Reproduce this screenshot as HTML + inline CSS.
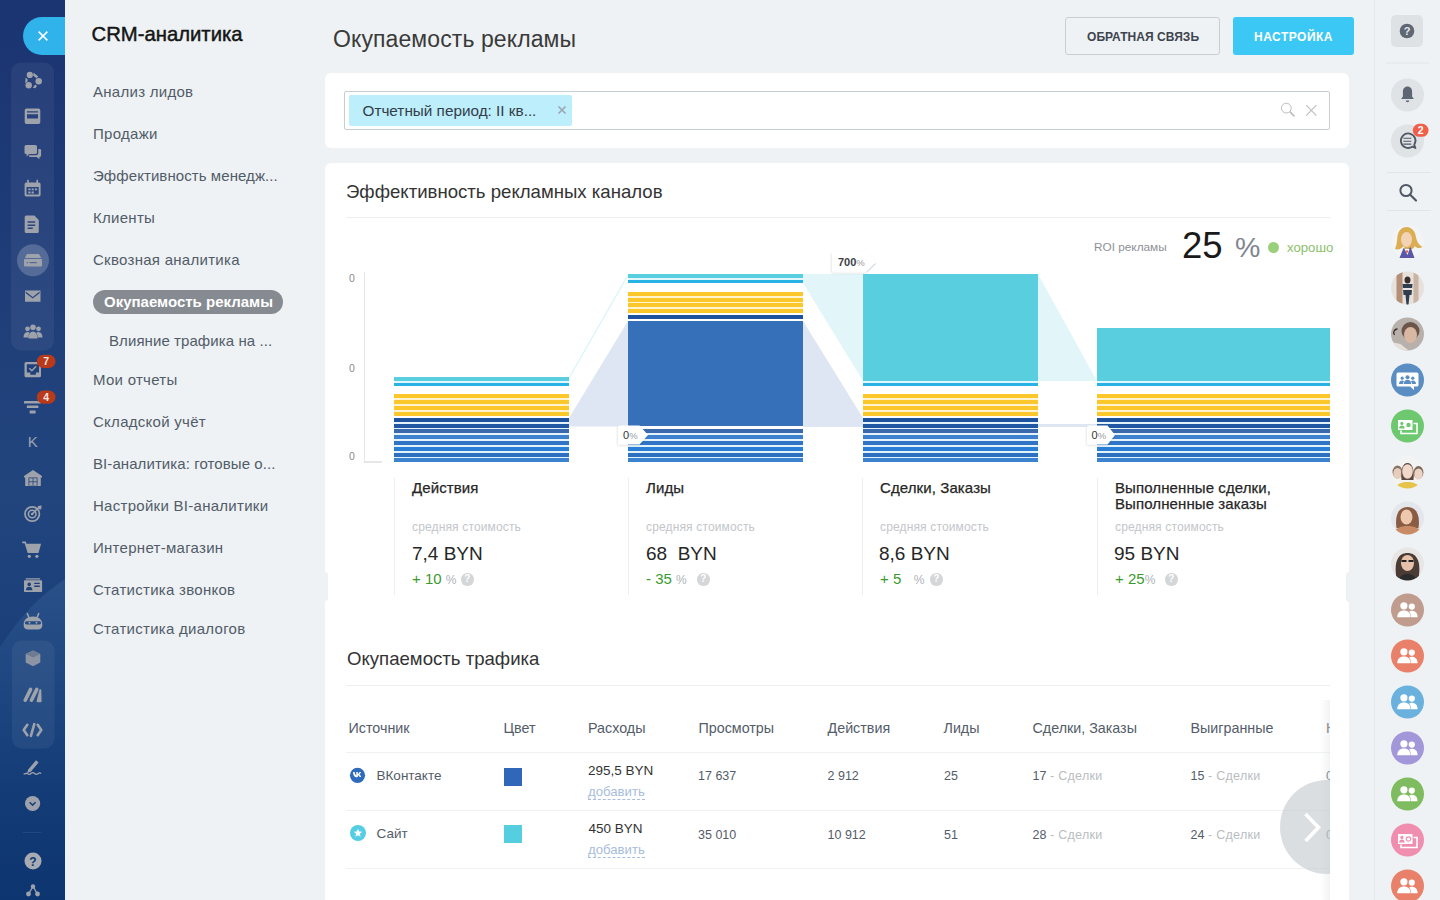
<!DOCTYPE html>
<html><head><meta charset="utf-8">
<style>
*{box-sizing:border-box;margin:0;padding:0}
html,body{width:1440px;height:900px;overflow:hidden}
body{background:#eef2f4;font-family:"Liberation Sans",sans-serif;color:#333;position:relative}
.a{position:absolute;white-space:nowrap}
#strip{position:absolute;left:0;top:0;width:65px;height:900px;background:linear-gradient(180deg,#1c3675 0%,#1f427f 45%,#143a76 75%,#0c3570 100%);overflow:hidden}
#closebtn{position:absolute;left:23px;top:17px;width:42px;height:38px;background:#2fb4ea;border-radius:19px 0 0 19px}
.grp{position:absolute;left:11px;width:43px;background:rgba(255,255,255,.06);border-radius:10px}
.menu{position:absolute;left:93px;font-size:15px;color:#525c69;letter-spacing:.28px}
.card{position:absolute;background:#fff;border-radius:6px}
#rpanel{position:absolute;left:1374px;top:0;width:66px;height:900px;background:#eef2f4;border-left:1px solid #e3e7ea}
.lt{top:479.4px;font-size:15px;color:#262626;letter-spacing:.1px;-webkit-text-stroke:.25px #262626}
.ls{top:520px;font-size:12px;color:#c3c6ca;letter-spacing:.15px}
.lv{top:542.5px;font-size:19px;color:#262626}
.lg{top:569.7px;font-size:15px;color:#3a9a2f}
.pc{font-size:12px;color:#b0b3b7}
.q{top:573px;width:12.5px;height:12.5px;border-radius:50%;background:#d4d6d8}
.q:after{content:"?";position:absolute;left:0;top:0;width:12.5px;text-align:center;font-size:10px;font-weight:bold;color:#fff;line-height:12.5px}
.th{top:720.1px;font-size:14.3px;color:#535c69}
.tn{font-size:13.5px;color:#535c69}
.tm{font-size:13.5px;color:#333}
.tl{font-size:13.2px;color:#a8bddc;border-bottom:1px dashed #a8bddc;line-height:15px}
.td{font-size:12.5px;color:#535c69}
.gs{color:#b9bdc1;letter-spacing:.3px}
</style></head><body>

<svg class="a" style="left:0;top:0" width="65" height="900" viewBox="0 0 65 900">
<defs>
<linearGradient id="sg" x1="0" y1="0" x2="0" y2="1">
<stop offset="0" stop-color="#1b3472"/>
<stop offset="0.3" stop-color="#1f3d78"/>
<stop offset="0.55" stop-color="#22457e"/>
<stop offset="0.8" stop-color="#163c77"/>
<stop offset="1" stop-color="#0d3570"/>
</linearGradient>
<linearGradient id="sg2" x1="0" y1="0" x2="0" y2="1">
<stop offset="0" stop-color="#2d548b" stop-opacity="1"/>
<stop offset=".5" stop-color="#1e4a85" stop-opacity=".5"/>
<stop offset="1" stop-color="#0c3873" stop-opacity="0"/>
</linearGradient>
</defs>
<rect width="65" height="900" fill="url(#sg)"/>
<path d="M0 647 Q28 603 65 579 L65 900 L0 900Z" fill="url(#sg2)" opacity=".8"/>
<path d="M65 17 L42 17 A19 19 0 0 0 42 55 L65 55Z" fill="#2fb3ea"/>
<path d="M38.6 31.6L47.4 40.4M47.4 31.6L38.6 40.4" stroke="#fff" stroke-width="1.5"/>
<rect x="11" y="62.5" width="43" height="288" rx="10" fill="#fff" fill-opacity=".055"/>
<rect x="12" y="640.5" width="42.5" height="108" rx="10" fill="#fff" fill-opacity=".055"/>
<g fill="#9ea2aa">
<!-- 1 circles -->
<circle cx="29.8" cy="74.9" r="3.1"/><circle cx="38.7" cy="81.2" r="3.2"/><circle cx="28.7" cy="85.3" r="3.2"/>
<path d="M33.7 72.8L38.3 76.6L36.6 78.2L33 75.4Z M25.6 77.6L27.6 79.3L27.5 81.6L25.2 83.2Z M32.8 87.8L35.2 84.6L37 86L35.2 88.2Z"/>
<!-- 2 window -->
<path d="M26.5 108.5h12a1.8 1.8 0 0 1 1.8 1.8v12a1.8 1.8 0 0 1 -1.8 1.8h-12a1.8 1.8 0 0 1 -1.8 -1.8v-12a1.8 1.8 0 0 1 1.8 -1.8Z M27 111.2v1.2h11v-1.2Z M27 114.3v4.2h11v-4.2Z" fill-rule="evenodd"/>
<!-- 3 chat -->
<path d="M24.5 146.5a1.6 1.6 0 0 1 1.6 -1.6h9.3a1.6 1.6 0 0 1 1.6 1.6v6a1.6 1.6 0 0 1 -1.6 1.6h-6l-2.8 2.3v-2.3h-0.5a1.6 1.6 0 0 1 -1.6 -1.6Z"/>
<path d="M38.3 149h1.5a1.3 1.3 0 0 1 1.3 1.3v5.3a1.3 1.3 0 0 1 -1.3 1.3h-0.4v2.4l-2.7 -2.4h-6.6a1.3 1.3 0 0 1 -1.3 -1.3v-0.3h7a2.5 2.5 0 0 0 2.5 -2.5Z"/>
<!-- 4 calendar -->
<path d="M26.3 182.5h12.6a1.7 1.7 0 0 1 1.7 1.7v10.6a1.7 1.7 0 0 1 -1.7 1.7h-12.6a1.7 1.7 0 0 1 -1.7 -1.7v-10.6a1.7 1.7 0 0 1 1.7 -1.7Z M26.5 187v7.5h12.2v-7.5Z M28.3 188.5h2.2v1.8h-2.2Z M31.6 188.5h2.2v1.8h-2.2Z M34.9 188.5h2.2v1.8h-2.2Z M28.3 191.6h2.2v1.8h-2.2Z M31.6 191.6h2.2v1.8h-2.2Z" fill-rule="evenodd"/>
<rect x="27.2" y="179.8" width="1.6" height="3.5"/><rect x="36.4" y="179.8" width="1.6" height="3.5"/>
<!-- 5 document -->
<path d="M26.2 215.6h8.2l4.4 4.4v11.5a1.5 1.5 0 0 1 -1.5 1.5h-11.1a1.5 1.5 0 0 1 -1.5 -1.5v-14.4a1.5 1.5 0 0 1 1.5 -1.5Z M27.6 221.3v1.5h7.6v-1.5Z M27.6 224.4v1.5h7.6v-1.5Z M27.6 227.5v1.5h5.2v-1.5Z" fill-rule="evenodd"/>
</g>
<!-- 6 active -->
<circle cx="33" cy="260.3" r="16" fill="#fff" fill-opacity=".2"/>
<g fill="#9ea2aa">
<path d="M27 254h12l2.2 4h-16.4Z"/>
<path d="M25 259h16.2a0.8 0.8 0 0 1 .8 .8v5.6a1 1 0 0 1 -1 1h-16a1 1 0 0 1 -1 -1v-5.6a.8 .8 0 0 1 .8 -.8Z M26.8 262h1.3v1.3h-1.3Z M29.6 262h7.2v1.3h-7.2Z" fill-rule="evenodd"/>
<!-- 7 mail -->
<path d="M25 290.5h15.5v11.2h-15.5Z M25.8 291.5l6.9 5.4 6.9 -5.4v1.8l-6.9 5.2 -6.9 -5.2Z" fill-rule="evenodd"/>
<!-- 8 people -->
<circle cx="33" cy="327.3" r="2.8"/><circle cx="27.5" cy="328.8" r="2.4"/><circle cx="38.5" cy="328.8" r="2.4"/>
<path d="M28.5 338.5c0 -4 1.8 -7 4.5 -7s4.5 3 4.5 7Z M23.5 337.5c0 -3.3 1.5 -5.5 4 -5.5 1 0 1.7 .3 2.3 .8c-1 1.3 -1.5 3 -1.5 4.7Z M42.5 337.5c0 -3.3 -1.5 -5.5 -4 -5.5 -1 0 -1.7 .3 -2.3 .8c1 1.3 1.5 3 1.5 4.7Z"/>
<!-- 9 task -->
<path d="M26 362h13.5a1.5 1.5 0 0 1 1.5 1.5v12.3a1.5 1.5 0 0 1 -1.5 1.5h-13.5a1.5 1.5 0 0 1 -1.5 -1.5v-12.3a1.5 1.5 0 0 1 1.5 -1.5Z M26.8 364.3v8.3h3.5v2.2h5.6v-2.2h3.1v-8.3Z" fill-rule="evenodd"/>
</g>
<path d="M29.3 368.2l2.6 2.5 4.2 -4.5" stroke="#9ea2aa" stroke-width="1.5" fill="none"/>
<g fill="#9ea2aa">
<!-- 10 funnel -->
<rect x="24" y="401" width="17" height="2.4" rx=".5"/><rect x="26.8" y="405.6" width="11.6" height="2.4" rx=".5"/><rect x="29.6" y="410.6" width="6" height="2.8" rx=".5"/>
<!-- 12 warehouse -->
<path d="M24 476l9 -6 9 6v1.5h-1.2v8.5h-15.6v-8.5h-1.2Z M28.5 477.5v8h9v-8Z" fill-rule="evenodd"/>
<rect x="29.3" y="478.3" width="3.3" height="3.1"/><rect x="33.4" y="478.3" width="3.3" height="3.1"/><rect x="29.3" y="482.2" width="3.3" height="3.3"/><rect x="33.4" y="482.2" width="3.3" height="3.3"/>
</g>
<g fill="none" stroke="#9ea2aa">
<!-- 13 target -->
<circle cx="32.2" cy="514" r="7.2" stroke-width="1.7"/><circle cx="32.2" cy="514" r="3.8" stroke-width="1.6"/>
<path d="M32.2 514L39 507.2" stroke-width="1.6"/>
</g>
<g fill="#9ea2aa">
<path d="M38 506l3.6 -.4 -.4 3.6 -1.6 .2 -1.8 -1.8Z"/>
<circle cx="32.2" cy="514" r="1.3"/>
<!-- 14 cart -->
<path d="M22.2 541.5h3.6l.7 2.3h14.6l-2.6 9.3h-10.8l-3.1 -9.8h-2.4Z"/>
<circle cx="29.3" cy="556.3" r="1.6"/><circle cx="36.9" cy="556.3" r="1.6"/>
<!-- 15 card -->
<path d="M25.7 578.2h14.5v1.3h-14.5Z M24.8 580.3h16.5a.8 .8 0 0 1 .8 .8v10.2a.8 .8 0 0 1 -.8 .8h-16.5a.8 .8 0 0 1 -.8 -.8v-10.2a.8 .8 0 0 1 .8 -.8Z M29.2 582.5a1.8 1.8 0 1 0 .01 0Z M26 590.3c0 -2.5 1.4 -3.6 3.2 -3.6s3.2 1.1 3.2 3.6Z M34.2 582.7h5.6v1.4h-5.6Z M34.2 585.5h5.6v1.4h-5.6Z" fill-rule="evenodd"/>
<!-- 16 robot -->
<path d="M27.3 613.5l1.5 3.8M38.7 613.5l-1.5 3.8" stroke="#9ea2aa" stroke-width="1.6" stroke-linecap="round"/>
<path d="M33 616.5c5.5 0 9.3 3 9.3 7.5v1.5c0 2.5 -2 4 -4.5 4h-9.6c-2.5 0 -4.5 -1.5 -4.5 -4v-1.5c0 -4.5 3.8 -7.5 9.3 -7.5Z M26.5 621.2h13a1.6 1.6 0 0 1 0 3.2h-13a1.6 1.6 0 0 1 0 -3.2Z" fill-rule="evenodd"/>
<circle cx="29.5" cy="622.8" r="1" /><circle cx="36.5" cy="622.8" r="1"/>
<!-- 17 cube -->
<path d="M33 650.5l7.3 3.6v8.4l-7.3 3.8 -7.3 -3.8v-8.4Z" fill="#8d94a3"/>
<path d="M33 650.5l7.3 3.6 -7.3 3.4 -7.3 -3.4Z" fill="#6f7b93"/>
<!-- 18 M -->
<path d="M25.2 700.2L30.6 689.4M31.4 700.2L36.8 689.4" stroke="#9ea2aa" stroke-width="3.6" stroke-linecap="round"/>
<path d="M37.6 701.2L40.3 690.3L40.6 701.2Z" stroke="#9ea2aa" stroke-width="2" stroke-linejoin="round"/>
</g>
<g fill="none" stroke="#9ea2aa" stroke-width="2.6" stroke-linecap="round" stroke-linejoin="round">
<!-- 19 code -->
<path d="M27.3 724.8l-3.6 5.2 3.6 5.2M37.7 724.8l3.6 5.2 -3.6 5.2M34.3 724.2l-3.4 11.6"/>
</g>
<g fill="#9ea2aa">
<!-- 20 signature -->
<path d="M28.2 769.5l7.8 -9.2 2.6 2.2 -7.8 9.2 -3.6 1.2Z"/>
</g>
<path d="M23.7 773.5c1.2 1.5 2.4 -1.2 3.7 0s2.4 1.2 3.6 0 2.4 -1.2 3.6 0 2.4 1.2 3.6 0 1.8 -1 3 0" fill="none" stroke="#9ea2aa" stroke-width="1.3"/>
<!-- 21 chevron -->
<circle cx="32.6" cy="803.5" r="7.6" fill="#9ea2aa"/>
<path d="M29.6 802.3l3 2.8 3 -2.8" fill="none" stroke="#15427c" stroke-width="1.5"/>
<rect x="22.5" y="832" width="19" height="1" fill="#fff" fill-opacity=".08"/>
<!-- 23 help -->
<circle cx="33" cy="861" r="8.5" fill="#a8abb2"/>
<text x="33" y="865.5" text-anchor="middle" font-family="Liberation Sans" font-weight="bold" font-size="12" fill="#0d3a75">?</text>
<!-- 24 network -->
<g fill="#9ea2aa"><circle cx="33" cy="886.5" r="2.2"/><circle cx="28.5" cy="894" r="2.4"/><circle cx="37.5" cy="894" r="2.4"/></g>
<path d="M33 886.5L28.5 894M33 886.5L37.5 894" stroke="#9ea2aa" stroke-width="1.4"/>
<!-- badges -->
<rect x="36.8" y="354.8" width="18.7" height="13.2" rx="6.6" fill="#b9391b"/>
<text x="46.2" y="365.3" text-anchor="middle" font-family="Liberation Sans" font-weight="bold" font-size="10.5" fill="#f3e6e3">7</text>
<rect x="36.8" y="390.5" width="18.7" height="13.2" rx="6.6" fill="#b9391b"/>
<text x="46.2" y="401" text-anchor="middle" font-family="Liberation Sans" font-weight="bold" font-size="10.5" fill="#f3e6e3">4</text>
<text x="27.8" y="447.3" font-family="Liberation Sans" font-size="15" fill="#9aa3b0">K</text>
</svg>


<div class="a" style="left:91.5px;top:23px;font-size:20.3px;color:#151515;-webkit-text-stroke:.45px #151515">CRM-аналитика</div>
<div class="menu a" style="top:83px">Анализ лидов</div>
<div class="menu a" style="top:125px">Продажи</div>
<div class="menu a" style="top:167px;letter-spacing:.08px">Эффективность менедж...</div>
<div class="menu a" style="top:209px">Клиенты</div>
<div class="menu a" style="top:251px">Сквозная аналитика</div>
<div class="a" style="left:93px;top:290px;width:190px;height:24px;border-radius:12px;background:#868b92"></div>
<div class="a" style="left:104px;top:293px;font-size:15px;font-weight:bold;color:#fff">Окупаемость рекламы</div>
<div class="menu a" style="left:109px;top:332px;letter-spacing:.08px">Влияние трафика на ...</div>
<div class="menu a" style="top:371px">Мои отчеты</div>
<div class="menu a" style="top:413px">Складской учёт</div>
<div class="menu a" style="top:455px;letter-spacing:.08px">BI-аналитика: готовые о...</div>
<div class="menu a" style="top:497px">Настройки BI-аналитики</div>
<div class="menu a" style="top:539px">Интернет-магазин</div>
<div class="menu a" style="top:581px">Статистика звонков</div>
<div class="menu a" style="top:620px">Статистика диалогов</div>

<div class="a" style="left:333px;top:26px;font-size:23px;color:#3a3a3a;letter-spacing:.1px">Окупаемость рекламы</div>

<div class="a" style="left:1065px;top:17px;width:155px;height:38px;border:1px solid #c9ced3;border-radius:3px"></div>
<div class="a" style="left:1087px;top:30px;font-size:12px;font-weight:bold;color:#3d444e;letter-spacing:.05px">ОБРАТНАЯ СВЯЗЬ</div>
<div class="a" style="left:1233px;top:17px;width:121px;height:38px;background:#3bc8f5;border-radius:3px"></div>
<div class="a" style="left:1254px;top:30px;font-size:12px;font-weight:bold;color:#fff;letter-spacing:.5px">НАСТРОЙКА</div>

<div class="card" style="left:325px;top:73px;width:1024px;height:75px"></div>
<div class="a" style="left:344px;top:91px;width:986px;height:39px;border:1px solid #c6cdd3;border-radius:2px"></div>

<div class="card" style="left:325px;top:163px;width:1024px;height:440px"></div>
<div class="card" style="left:325px;top:598px;width:1024px;height:320px;border-radius:0"></div>
<div class="a" style="left:325px;top:572px;width:3px;height:29px;background:#eef2f4;border-radius:0 3px 3px 0"></div>
<div class="a" style="left:1345.5px;top:572px;width:3.5px;height:30px;background:#eef2f4;border-radius:3px 0 0 3px"></div>

<svg class="a" style="left:325px;top:163px" width="1024" height="440" viewBox="325 163 1024 440">
<polygon points="569,418 628,321 628,426.5 569,426.5" fill="#dde6f2"/>
<line x1="569" y1="378" x2="628" y2="275" stroke="#d8f4f6" stroke-width="1.2"/>
<polygon points="803,274 863,274 863,381 803,283" fill="#e2f6f9"/>
<polygon points="803,321 863,418 863,427 803,427" fill="#dde6f2"/>
<polygon points="1038,274 1097,381 1038,381" fill="#e2f6f9"/>
<rect x="1038" y="424" width="59" height="3" fill="#dde6f2"/>
<rect x="394" y="377" width="175" height="4" fill="#58cedf"/><rect x="394" y="383" width="175" height="3" fill="#28b2e6"/><rect x="394" y="381" width="175" height="2" fill="#e0f8fc"/><rect x="394" y="394" width="175" height="22" fill="#fff4cf"/><rect x="394" y="418" width="175" height="44" fill="#e2f3fc"/><rect x="394" y="394" width="175" height="4" fill="#fbc72a"/><rect x="394" y="400" width="175" height="4" fill="#fbc72a"/><rect x="394" y="406" width="175" height="4" fill="#fbc72a"/><rect x="394" y="412" width="175" height="4" fill="#fbc72a"/><rect x="394" y="418" width="175" height="4" fill="#1d529e"/><rect x="394" y="424" width="175" height="4" fill="#2058a4"/><rect x="394" y="429" width="175" height="4" fill="#3a6aad"/><rect x="394" y="435" width="175" height="4" fill="#3d80cd"/><rect x="394" y="441" width="175" height="4" fill="#2f74c5"/><rect x="394" y="447" width="175" height="4" fill="#2b7ed5"/><rect x="394" y="453" width="175" height="4" fill="#2e70c0"/><rect x="394" y="458" width="175" height="4" fill="#3b82cf"/>
<rect x="628" y="278" width="175" height="2" fill="#e0f8fc"/><rect x="628" y="292" width="175" height="21" fill="#fff4cf"/><rect x="628" y="429" width="175" height="33" fill="#e2f3fc"/><rect x="628" y="274" width="175" height="4" fill="#58cedf"/><rect x="628" y="280" width="175" height="3" fill="#28b2e6"/><rect x="628" y="292" width="175" height="4" fill="#fbc72a"/><rect x="628" y="298" width="175" height="4" fill="#fbc72a"/><rect x="628" y="303" width="175" height="4" fill="#fbc72a"/><rect x="628" y="309" width="175" height="4" fill="#fbc72a"/><rect x="628" y="315" width="175" height="4" fill="#1d529e"/><rect x="628" y="321" width="175" height="105" fill="#3670b9"/><rect x="628" y="429" width="175" height="4" fill="#3a6aad"/><rect x="628" y="435" width="175" height="4" fill="#3d80cd"/><rect x="628" y="441" width="175" height="4" fill="#2f74c5"/><rect x="628" y="447" width="175" height="4" fill="#2b7ed5"/><rect x="628" y="453" width="175" height="4" fill="#2e70c0"/><rect x="628" y="458" width="175" height="4" fill="#3b82cf"/>
<rect x="863" y="274" width="175" height="107" fill="#58cedf"/><rect x="863" y="383" width="175" height="3" fill="#28b2e6"/><rect x="863" y="381" width="175" height="2" fill="#e0f8fc"/><rect x="863" y="394" width="175" height="22" fill="#fff4cf"/><rect x="863" y="418" width="175" height="44" fill="#e2f3fc"/><rect x="863" y="394" width="175" height="4" fill="#fbc72a"/><rect x="863" y="400" width="175" height="4" fill="#fbc72a"/><rect x="863" y="406" width="175" height="4" fill="#fbc72a"/><rect x="863" y="412" width="175" height="4" fill="#fbc72a"/><rect x="863" y="418" width="175" height="4" fill="#1d529e"/><rect x="863" y="424" width="175" height="4" fill="#2058a4"/><rect x="863" y="429" width="175" height="4" fill="#3a6aad"/><rect x="863" y="435" width="175" height="4" fill="#3d80cd"/><rect x="863" y="441" width="175" height="4" fill="#2f74c5"/><rect x="863" y="447" width="175" height="4" fill="#2b7ed5"/><rect x="863" y="453" width="175" height="4" fill="#2e70c0"/><rect x="863" y="458" width="175" height="4" fill="#3b82cf"/>
<rect x="1097" y="328" width="233" height="53" fill="#58cedf"/><rect x="1097" y="383" width="233" height="3" fill="#28b2e6"/><rect x="1097" y="381" width="233" height="2" fill="#e0f8fc"/><rect x="1097" y="394" width="233" height="22" fill="#fff4cf"/><rect x="1097" y="418" width="233" height="44" fill="#e2f3fc"/><rect x="1097" y="394" width="233" height="4" fill="#fbc72a"/><rect x="1097" y="400" width="233" height="4" fill="#fbc72a"/><rect x="1097" y="406" width="233" height="4" fill="#fbc72a"/><rect x="1097" y="412" width="233" height="4" fill="#fbc72a"/><rect x="1097" y="418" width="233" height="4" fill="#1d529e"/><rect x="1097" y="424" width="233" height="4" fill="#2058a4"/><rect x="1097" y="429" width="233" height="4" fill="#3a6aad"/><rect x="1097" y="435" width="233" height="4" fill="#3d80cd"/><rect x="1097" y="441" width="233" height="4" fill="#2f74c5"/><rect x="1097" y="447" width="233" height="4" fill="#2b7ed5"/><rect x="1097" y="453" width="233" height="4" fill="#2e70c0"/><rect x="1097" y="458" width="233" height="4" fill="#3b82cf"/>
<defs><filter id="tsh" x="-30%" y="-30%" width="160%" height="160%"><feDropShadow dx="-0.5" dy="1" stdDeviation="1" flood-color="#000" flood-opacity=".13"/></filter></defs>
<path d="M619.5 425.4H639.5L648 435.0L639.5 444.6H619.5Q618 444.6 618 443.1V426.9Q618 425.4 619.5 425.4Z" fill="#fff" filter="url(#tsh)"/>
<text x="623" y="439" font-family="Liberation Sans" font-size="11" fill="#333">0<tspan font-size="9.5" fill="#9a9a9a">%</tspan></text>
<path d="M1088.5 425.4H1107.5L1115 435.0L1107.5 444.6H1088.5Q1087 444.6 1087 443.1V426.9Q1087 425.4 1088.5 425.4Z" fill="#fff" filter="url(#tsh)"/>
<text x="1091.5" y="439" font-family="Liberation Sans" font-size="11" fill="#333">0<tspan font-size="9.5" fill="#9a9a9a">%</tspan></text>
<path d="M833.5 251.7H868.5L876 262.5L866 272.2H833.5Q832 272.2 832 270.7V253.2Q832 251.7 833.5 251.7Z" fill="#fff" filter="url(#tsh)"/>
<path d="M866.5 272L875.5 263.5" stroke="#cfd2d6" stroke-width="1"/>
<text x="838" y="265.8" font-family="Liberation Sans" font-size="11" font-weight="bold" fill="#3b4047">700<tspan font-size="9.5" font-weight="normal" fill="#9a9a9a">%</tspan></text>
</svg>

<div class="a" style="left:349px;top:95px;width:223px;height:31px;background:#bdeefc;border-radius:2px"></div>
<div class="a" style="left:362.5px;top:101.5px;font-size:15.3px;color:#333d47">Отчетный период: II кв...</div>
<svg class="a" style="left:557px;top:105px" width="10" height="10" viewBox="0 0 10 10"><path d="M1.5 1.5L8.5 8.5M8.5 1.5L1.5 8.5" stroke="#9aa6b0" stroke-width="1.6"/></svg>
<svg class="a" style="left:1278px;top:100px" width="20" height="20" viewBox="0 0 20 20"><circle cx="8.3" cy="8.1" r="4.9" fill="none" stroke="#bdbdbd" stroke-width="1"/><path d="M11.8 11.6L16.5 16.4" stroke="#bdbdbd" stroke-width="1.6"/></svg>
<svg class="a" style="left:1304px;top:103px" width="14" height="14" viewBox="0 0 14 14"><path d="M2.2 2.2L12.4 12.7M12.4 2.2L2.2 12.7" stroke="#bdbdbd" stroke-width="1.1"/></svg>

<div class="a" style="left:347px;top:648.2px;font-size:18.6px;color:#333">Окупаемость трафика</div>
<div class="a" style="left:346px;top:685px;width:984px;height:1px;background:#eceef0"></div>
<div class="th a" style="left:348.5px">Источник</div>
<div class="th a" style="left:503.5px">Цвет</div>
<div class="th a" style="left:588px">Расходы</div>
<div class="th a" style="left:698.5px">Просмотры</div>
<div class="th a" style="left:827.5px">Действия</div>
<div class="th a" style="left:943.5px">Лиды</div>
<div class="th a" style="left:1032.5px">Сделки, Заказы</div>
<div class="th a" style="left:1190.5px">Выигранные</div>

<div class="a" style="left:346px;top:751.5px;width:984px;height:1px;background:#f0f1f3"></div>
<div class="a" style="left:346px;top:809.5px;width:984px;height:1px;background:#f0f1f3"></div>
<div class="a" style="left:346px;top:867.5px;width:984px;height:1px;background:#f0f1f3"></div>

<svg class="a" style="left:349px;top:767px" width="17" height="17" viewBox="0 0 17 17"><circle cx="8.5" cy="8.3" r="7.6" fill="#2f6bbd"/><path d="M4 5h1.7c.1 2 1 3.2 1.6 3.4V5h1.5v1.9c.7-.1 1.4-1 1.7-1.9h1.5c-.3 1.2-1.1 2.1-1.7 2.5.6.3 1.5 1.1 1.9 2.6h-1.6c-.4-1-1.1-1.7-1.8-1.8v1.8h-.3C6 11.1 4.1 8.7 4 5Z" fill="#fff"/></svg>
<div class="tn a" style="left:376.5px;top:767.8px">ВКонтакте</div>
<div class="a" style="left:504px;top:768px;width:18px;height:18px;background:#3067b9"></div>
<div class="tm a" style="left:588px;top:763.3px">295,5 BYN</div>
<div class="tl a" style="left:588px;top:784.3px">добавить</div>
<div class="td a" style="left:698px;top:769.2px">17 637</div>
<div class="td a" style="left:827.5px;top:769.2px">2 912</div>
<div class="td a" style="left:944px;top:769.2px">25</div>
<div class="td a" style="left:1032.5px;top:769.2px">17 <span class="gs">- Сделки</span></div>
<div class="td a" style="left:1190.5px;top:769.2px">15 <span class="gs">- Сделки</span></div>


<div class="a" style="left:349.5px;top:825px;width:16px;height:16px;border-radius:50%;background:#55cde2"></div>
<svg class="a" style="left:351.5px;top:827px" width="12" height="12" viewBox="0 0 12 12"><path d="M6 1.8L7.2 4.6L10.2 4.8L7.9 6.8L8.6 9.8L6 8.2L3.4 9.8L4.1 6.8L1.8 4.8L4.8 4.6Z" fill="#fff"/></svg>
<div class="tn a" style="left:376.5px;top:825.8px">Сайт</div>
<div class="a" style="left:504px;top:825px;width:18px;height:18px;background:#55cfe0"></div>
<div class="tm a" style="left:588.5px;top:820.8px">450 BYN</div>
<div class="tl a" style="left:588px;top:842px">добавить</div>
<div class="td a" style="left:698px;top:828px">35 010</div>
<div class="td a" style="left:827.5px;top:828px">10 912</div>
<div class="td a" style="left:944px;top:828px">51</div>
<div class="td a" style="left:1032.5px;top:828px">28 <span class="gs">- Сделки</span></div>
<div class="td a" style="left:1190.5px;top:828px">24 <span class="gs">- Сделки</span></div>

<div class="th a" style="left:1326px">К</div><div class="td a" style="left:1326px;top:769.2px">0</div><div class="td a" style="left:1326px;top:828px">0</div>
<div class="a" style="left:1320px;top:700px;width:10px;height:200px;background:linear-gradient(90deg,rgba(225,228,232,0),rgba(225,228,232,.45))"></div>
<div class="a" style="left:1330px;top:690px;width:19px;height:210px;background:#fff"></div>
<div class="a" style="left:1280px;top:780px;width:50px;height:94px;overflow:hidden"><div style="position:absolute;left:0;top:0;width:94px;height:94px;border-radius:50%;background:rgba(196,201,205,.62)"></div>
<svg style="position:absolute;left:0;top:0" width="50" height="94" viewBox="0 0 50 94"><path d="M25.5 34L38.5 47.5L25.5 61" fill="none" stroke="#fff" stroke-width="3.6"/></svg></div>


<div class="a" style="left:346px;top:181px;font-size:18.6px;color:#333">Эффективность рекламных каналов</div>
<div class="a" style="left:346px;top:217px;width:984px;height:1px;background:#eceef0"></div>
<div class="a" style="left:1094px;top:239.6px;font-size:11.8px;color:#8d9196">ROI рекламы</div>
<div class="a" style="left:1182px;top:225px;font-size:36.5px;color:#1a1a1a">25</div>
<div class="a" style="left:1235px;top:231px;font-size:28.5px;color:#7f8590">%</div>
<div class="a" style="left:1267.5px;top:241.5px;width:11px;height:11px;border-radius:50%;background:#9ccf7b"></div>
<div class="a" style="left:1287px;top:240px;font-size:13.2px;color:#8cc06b">хорошо</div>
<div class="a" style="left:349px;top:272px;font-size:10.5px;color:#8a8a8a">0</div>
<div class="a" style="left:349px;top:361.5px;font-size:10.5px;color:#8a8a8a">0</div>
<div class="a" style="left:349px;top:450.3px;font-size:10.5px;color:#8a8a8a">0</div>
<div class="a" style="left:363.5px;top:272px;width:1.5px;height:190px;background:#e6e6e6"></div>
<div class="a" style="left:364px;top:461px;width:18px;height:1.5px;background:#e6e6e6"></div>
<div class="a" style="left:394px;top:478px;width:1px;height:117px;background:#eceef0"></div>
<div class="a" style="left:628px;top:478px;width:1px;height:117px;background:#eceef0"></div>
<div class="a" style="left:862px;top:478px;width:1px;height:117px;background:#eceef0"></div>
<div class="a" style="left:1097px;top:478px;width:1px;height:117px;background:#eceef0"></div>
<div class="lt a" style="left:412px">Действия</div>
<div class="lt a" style="left:646px">Лиды</div>
<div class="lt a" style="left:880px">Сделки, Заказы</div>
<div class="lt a" style="left:1115px">Выполненные сделки,</div>
<div class="lt a" style="left:1115px;top:495.4px">Выполненные заказы</div>
<div class="ls a" style="left:412px">средняя стоимость</div>
<div class="ls a" style="left:646px">средняя стоимость</div>
<div class="ls a" style="left:880px">средняя стоимость</div>
<div class="ls a" style="left:1115px">средняя стоимость</div>
<div class="lv a" style="left:412px">7,4 BYN</div>
<div class="lv a" style="left:646px">68&nbsp; BYN</div>
<div class="lv a" style="left:879px">8,6 BYN</div>
<div class="lv a" style="left:1114px">95 BYN</div>
<div class="lg a" style="left:412px">+ 10 <span class="pc">%</span></div>
<div class="lg a" style="left:646px">- 35 <span class="pc">%</span></div>
<div class="lg a" style="left:880px">+ 5 &nbsp; <span class="pc">%</span></div>
<div class="lg a" style="left:1115px">+ 25<span class="pc">%</span></div>
<div class="q a" style="left:461px"></div>
<div class="q a" style="left:697px"></div>
<div class="q a" style="left:930px"></div>
<div class="q a" style="left:1165px"></div>


<div id="rpanel"></div>
<svg class="a" style="left:1374px;top:0" width="66" height="900" viewBox="1374 0 66 900">
<rect x="1391" y="15" width="32" height="32" rx="5" fill="#dfe2e5"/>
<circle cx="1407" cy="31" r="7.3" fill="#5f6773"/>
<text x="1407" y="35.2" text-anchor="middle" font-family="Liberation Sans" font-weight="bold" font-size="11" fill="#e6e8ea">?</text>
<rect x="1386" y="62.5" width="43" height="1" fill="#e1e5e8"/>
<circle cx="1407.5" cy="95" r="16.5" fill="#e0e3e6"/>
<path d="M1407.5 86.5c-3 0 -4.6 2.4 -4.6 5.4v4.6l-1.8 2.5h12.8l-1.8 -2.5v-4.6c0 -3 -1.6 -5.4 -4.6 -5.4Z" fill="#5d6672"/>
<path d="M1405.7 100.5a1.8 1.8 0 0 0 3.6 0Z" fill="#5d6672"/>
<circle cx="1407.5" cy="141" r="16.5" fill="#e0e3e6"/>
<path d="M1414.2 144.8A7.3 7.3 0 1 0 1412.3 146.7L1415.5 148Z" fill="none" stroke="#4f5864" stroke-width="1.8" stroke-linejoin="round"/>
<path d="M1403.3 138.3h8M1403.3 141.2h8M1403.3 144.1h8" stroke="#4f5864" stroke-width="1.1"/>
<rect x="1412.8" y="123.8" width="15.7" height="13" rx="6.5" fill="#ef5f4a"/>
<text x="1420.6" y="134.2" text-anchor="middle" font-family="Liberation Sans" font-weight="bold" font-size="10.5" fill="#fff">2</text>
<rect x="1387" y="172" width="44" height="1" fill="#e1e5e8"/>
<circle cx="1406" cy="190.5" r="5.6" fill="none" stroke="#4f5864" stroke-width="2"/>
<path d="M1410.2 194.7L1416 200.5" stroke="#4f5864" stroke-width="2.2" stroke-linecap="round"/>
<rect x="1387" y="210" width="44" height="1" fill="#e1e5e8"/>
<defs><clipPath id="av"><circle cx="0" cy="0" r="16.5"/></clipPath>
<g id="grp"><circle cx="-3.6" cy="-4.2" r="3.6" fill="#fff"/><path d="M-10.3 7.2c0 -4.2 2.6 -6.8 6.7 -6.8s6.7 2.6 6.7 6.8Z" fill="#fff"/><circle cx="4.3" cy="-3.4" r="3.1" fill="#fff"/><path d="M3.5 7.2c0 -2.5 -.6 -4.4 -1.9 -5.8 .8 -.5 1.7 -.7 2.7 -.7 3.6 0 5.8 2.3 5.8 6.5Z" fill="#fff"/></g>
<g id="crd"><rect x="-9.5" y="-6" width="15" height="10.5" fill="none" stroke="#fff" stroke-width="1.6"/><rect x="-6.3" y="-3" width="15.5" height="10" fill="none" stroke="#fff" stroke-width="1.6"/><rect x="-8.7" y="-5.2" width="13.4" height="9" fill="#fff"/><circle cx="-5" cy="-2" r="1.5" fill="#888"/><circle cx="1" cy="-1.2" r="2" fill="none" stroke="#888" stroke-width="1"/></g>
</defs>
<!-- photo avatars -->
<g transform="translate(1407.5 242)"><circle r="16.5" fill="#f3f4f5"/><path d="M-12.5 7c2-4 2-9 2.5-13 1-6 5-9 9-9s8 3 9 8c1 5 2 9 7 12-3 2-6 1-8-1 0 2-3 4-6 4-3 0-4-2-5-4-2 3-5 4-8.5 3Z" fill="#dcae54"/><ellipse cx="-1" cy="-2.5" rx="5.5" ry="7.5" fill="#f3d3b5"/><path d="M-8 16l4-10 4 2 3-3 4 11Z" fill="#5a57a8"/><path d="M-3 7l3 6 2-6Z" fill="#fff"/><circle cx="-.5" cy="9.5" r="1.3" fill="#e0624f"/></g>
<g transform="translate(1407.5 288)" clip-path="url(#av)"><rect x="-17" y="-17" width="34" height="34" fill="#e6e1dc"/><rect x="-11" y="-17" width="6" height="34" fill="#b48f78"/><rect x="6" y="-17" width="5" height="34" fill="#c9b4a3"/><ellipse cx="0" cy="-8" rx="3" ry="3.6" fill="#3b2f2c"/><path d="M-5 -4h10l-1 11h-2l-1 10h-2l-1 -10h-2Z" fill="#2e3e4f"/><rect x="-4.5" y="0" width="9" height="2" fill="#e8e3e0"/></g>
<g transform="translate(1407.5 334)" clip-path="url(#av)"><rect x="-17" y="-17" width="34" height="34" fill="#b8b0aa"/><ellipse cx="3" cy="-3" rx="9" ry="9" fill="#6a5548"/><ellipse cx="3" cy="1" rx="6.5" ry="8" fill="#d9b8a3"/><path d="M-17 8l10 2 10 8h-20Z" fill="#e8e1da"/><path d="M-10 -5c-3 0 -5 3 -3 6" stroke="#3a2d29" stroke-width="1.3" fill="none"/></g>
<g transform="translate(1407.5 380)"><circle r="16.5" fill="#5a8dc2"/><path d="M-9.5 -7.5h19a1.5 1.5 0 0 1 1.5 1.5v11a1.5 1.5 0 0 1 -1.5 1.5h-3v3.5l-3.8 -3.5h-12.2a1.5 1.5 0 0 1 -1.5 -1.5v-11a1.5 1.5 0 0 1 1.5 -1.5Z" fill="#fff"/><g fill="#5a8dc2"><circle cx="0" cy="-2.8" r="2"/><path d="M-3.8 4c0 -2.6 1.5 -4.3 3.8 -4.3s3.8 1.7 3.8 4.3Z"/><circle cx="-5.3" cy="-1.8" r="1.6"/><path d="M-8.5 4c0 -2 1.2 -3.4 3.2 -3.4 .8 0 1.4 .2 1.9 .6 -.8 .8 -1.2 1.7 -1.2 2.8Z"/><circle cx="5.3" cy="-1.8" r="1.6"/><path d="M8.5 4c0 -2 -1.2 -3.4 -3.2 -3.4 -.8 0 -1.4 .2 -1.9 .6 .8 .8 1.2 1.7 1.2 2.8Z"/></g></g>
<g transform="translate(1407.5 426)"><circle r="16.5" fill="#6ec870"/><rect x="-9.5" y="-6" width="14.5" height="10" fill="#fff"/><path d="M-6.5 4.5v3h16v-10h-3.5" fill="none" stroke="#fff" stroke-width="1.6"/><circle cx="-5.6" cy="-2.6" r="1.6" fill="#6ec870"/><path d="M-8.4 2.5c0 -2 1.2 -3 2.8 -3s2.8 1 2.8 3Z" fill="#6ec870"/><circle cx="1" cy="-1" r="2.2" fill="#6ec870"/></g>
<g transform="translate(1407.5 472)" clip-path="url(#av)"><rect x="-17" y="-17" width="34" height="34" fill="#f2f3f3"/><ellipse cx="-10" cy="0" rx="5" ry="6.5" fill="#8a7466"/><ellipse cx="-10" cy="1.5" rx="4.2" ry="5.5" fill="#e8cdbd"/><ellipse cx="11" cy="0.5" rx="5" ry="6.5" fill="#7d685c"/><ellipse cx="11" cy="2" rx="4.2" ry="5.5" fill="#ecd3c3"/><path d="M-6 8c-1-10 1-17 6-17s7 7 6 17Z" fill="#5f4a40"/><ellipse cx="0" cy="-.5" rx="5.3" ry="7.3" fill="#f1d8c8"/><path d="M-12 17c1-5 5-7 12-7s11 2 12 7Z" fill="#e6c34a"/></g>
<g transform="translate(1407.5 518)" clip-path="url(#av)"><rect x="-17" y="-17" width="34" height="34" fill="#e3e6ea"/><path d="M-11 10c-2 -14 3 -21 11 -21s13 7 11 21Z" fill="#8a5c44"/><ellipse cx="-1" cy="-1" rx="6" ry="7.5" fill="#eec8ad"/><path d="M-15 17c2 -7 8 -9 15 -9s13 2 15 9Z" fill="#c98b65"/></g>
<g transform="translate(1407.5 564)" clip-path="url(#av)"><rect x="-17" y="-17" width="34" height="34" fill="#e8e6e4"/><path d="M-11 14c-3 -17 2 -25 11 -25s14 8 11 25Z" fill="#4a3c35"/><ellipse cx="0" cy="-1" rx="6.5" ry="8" fill="#e6c1a9"/><path d="M-6 -3h5M1 -3h5" stroke="#222" stroke-width="2.2"/><path d="M-9 17c1 -5 4 -7 9 -7s8 2 9 7Z" fill="#2b2b2b"/></g>
<g transform="translate(1407.5 610)"><circle r="16.5" fill="#bf9c8e"/><use href="#grp"/></g>
<g transform="translate(1407.5 656)"><circle r="16.5" fill="#e8806a"/><use href="#grp"/></g>
<g transform="translate(1407.5 702)"><circle r="16.5" fill="#6bb1de"/><use href="#grp"/></g>
<g transform="translate(1407.5 748)"><circle r="16.5" fill="#a297d9"/><use href="#grp"/></g>
<g transform="translate(1407.5 794)"><circle r="16.5" fill="#7fbb5f"/><use href="#grp"/></g>
<g transform="translate(1407.5 840)"><circle r="16.5" fill="#f08eb0"/><rect x="-9.5" y="-6" width="14.5" height="10" fill="#fff"/><path d="M-6.5 4.5v3h16v-10h-3.5" fill="none" stroke="#fff" stroke-width="1.6"/><circle cx="-5.6" cy="-2.6" r="1.6" fill="#f08eb0"/><path d="M-8.4 2.5c0 -2 1.2 -3 2.8 -3s2.8 1 2.8 3Z" fill="#f08eb0"/><circle cx="1" cy="-1" r="2.2" fill="none" stroke="#f08eb0" stroke-width="1.2"/></g>
<g transform="translate(1407.5 886)"><circle r="16.5" fill="#e8806a"/><use href="#grp"/></g>
</svg>


</body></html>
